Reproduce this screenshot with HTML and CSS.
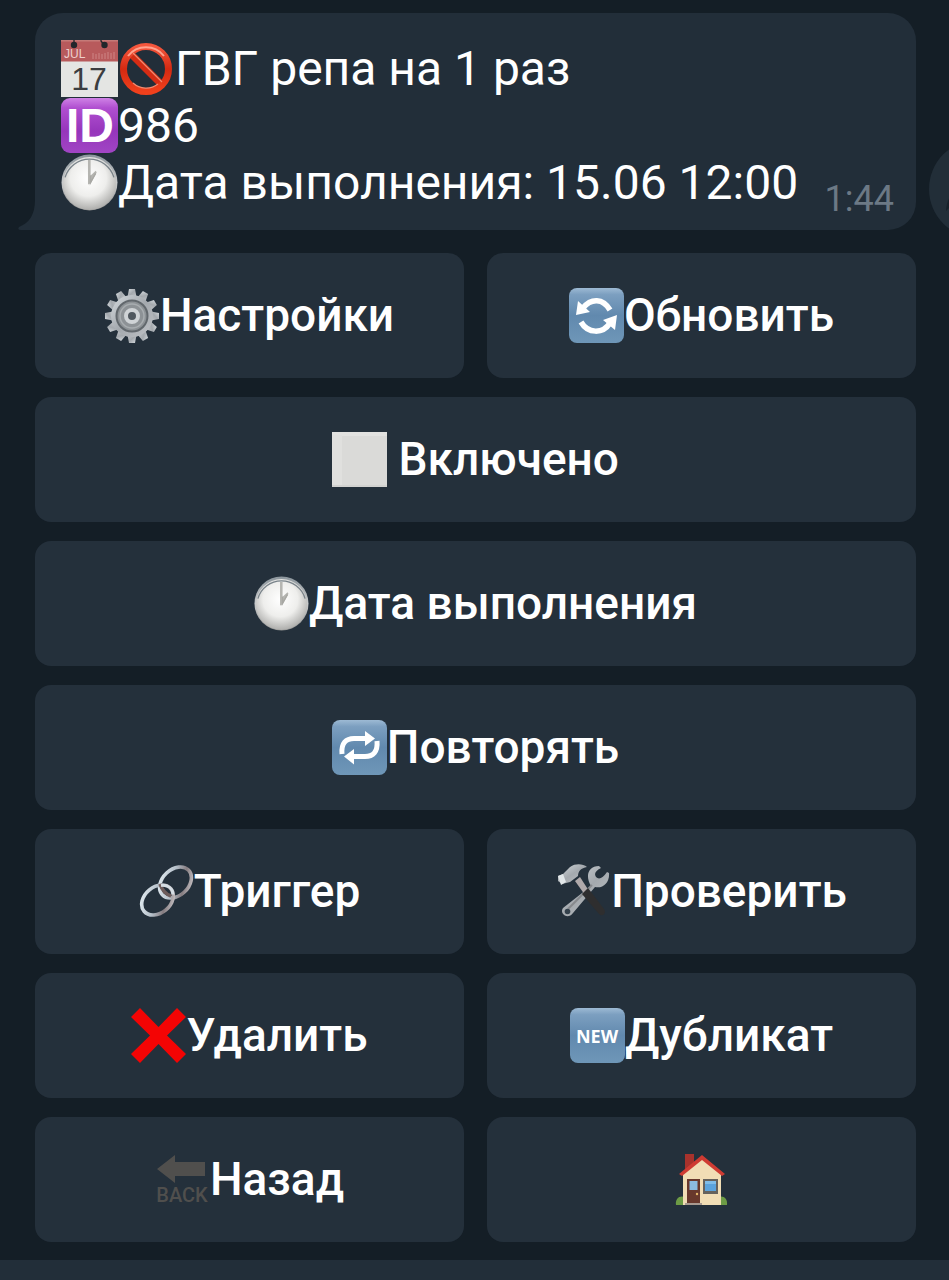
FILE: index.html
```html
<!DOCTYPE html>
<html lang="ru">
<head>
<meta charset="utf-8">
<meta name="viewport" content="width=device-width, initial-scale=1">
<title>ГВГ репа на 1 раз</title>
<link rel="stylesheet" href="styles.css">
</head>
<body>
<svg class="defs" aria-hidden="true">
  <defs>
    <linearGradient id="blue" x1="0" y1="0" x2="0" y2="1"><stop offset="0" stop-color="#9dbad4"/><stop offset=".12" stop-color="#7c9fc0"/><stop offset=".5" stop-color="#6189ae"/><stop offset="1" stop-color="#6f97b8"/></linearGradient>
    <linearGradient id="purple" x1="0" y1="0" x2="0" y2="1"><stop offset="0" stop-color="#cf82e6"/><stop offset=".18" stop-color="#b04fd0"/><stop offset=".6" stop-color="#9636bb"/><stop offset="1" stop-color="#a145c4"/></linearGradient>
    <linearGradient id="red" x1="0" y1="0" x2="0" y2="1"><stop offset="0" stop-color="#f4563c"/><stop offset=".5" stop-color="#d42a12"/><stop offset="1" stop-color="#f0401c"/></linearGradient>
    <linearGradient id="rim" x1="0" y1="0" x2="0" y2="1"><stop offset="0" stop-color="#8b959c"/><stop offset=".5" stop-color="#c9cbcc"/><stop offset="1" stop-color="#8f8f8e"/></linearGradient>
    <radialGradient id="face" cx=".48" cy=".4" r=".62"><stop offset="0" stop-color="#ffffff"/><stop offset=".55" stop-color="#eeeeec"/><stop offset="1" stop-color="#a9a9a7"/></radialGradient>
    <linearGradient id="steel" x1="0" y1="0" x2="1" y2="1"><stop offset="0" stop-color="#d5dade"/><stop offset=".5" stop-color="#a4a9ae"/><stop offset="1" stop-color="#c0c3c7"/></linearGradient>
    <linearGradient id="link" x1="0" y1="0" x2="1" y2="1"><stop offset="0" stop-color="#eaf3f8"/><stop offset=".45" stop-color="#b4bec8"/><stop offset=".7" stop-color="#857c80"/><stop offset="1" stop-color="#dedbdd"/></linearGradient>
    <symbol id="clock" viewBox="0 0 56 56">
      <circle cx="28" cy="28" r="27.5" fill="url(#rim)"/>
      <circle cx="28" cy="29" r="26" fill="url(#face)"/>
      <path d="M4 23a25 25 0 0 1 48 0" fill="none" stroke="#79838a" stroke-width="1.3"/>
      <path d="M26.500 6h2.600v15l5-4.500 1 1.500-6 11-2.600 1z" fill="#b5b5b1"/>
      <path d="M29 21v7l5-9" fill="none" stroke="#a8a8a4" stroke-width="1.500"/>
    </symbol>
  </defs>
</svg>

<main class="chat">
  <article class="message">
    <svg class="tail" viewBox="0 0 40 60" aria-hidden="true"><path d="M17 0V30C17 45 11 53 1 57Q-1 60 3 60H40V0z"/></svg>
    <div class="message-text">
      <p class="line">
        <svg class="emoji" viewBox="0 0 57 57" role="img" aria-label="Календарь">
          <path fill="#e4e5e3" d="M0 0h57v57H0z"/><path fill="#b85a5c" d="M0 0h57v21.500H0z"/><path fill="#c57a78" d="M0 0h57v1.500H0z"/>
          <g fill="#22262b"><circle cx="13" cy="5" r="3.200"/><circle cx="43.500" cy="5" r="3.200"/></g>
          <path d="M13 5V-1M43 5l-3-4V-1" fill="none" stroke="#22262b" stroke-width="1.300"/>
          <path d="M32 13v6M35 14v5M38 13v6M41 14v5M44 13v6M47 12v7M50 13v6M53 12v7" stroke="#ce8585"/>
          <text class="cal-month" x="3" y="18">JUL</text><text class="cal-day" x="28" y="50">17</text>
        </svg><svg class="emoji" viewBox="0 0 57 57" role="img" aria-label="Запрещено">
          <path d="M13 14 43 44" stroke="#d52c14" stroke-width="7"/>
          <circle cx="28" cy="29" r="22.500" fill="none" stroke="url(#red)" stroke-width="7"/>
          <path d="M10 16a23 23 0 0 1 36 0" fill="none" stroke="#ffa38f" stroke-width="2"/>
          <path d="M15 43a19.500 19.500 0 0 0 25 1M15 13l29 29" fill="none" stroke="#f18a70" stroke-width="1.200"/>
        </svg><span>ГВГ репа на 1 раз</span>
      </p>
      <p class="line">
        <svg class="emoji" viewBox="0 0 57 57" role="img" aria-label="Номер">
          <rect y="1" width="57" height="55" rx="9" fill="url(#purple)"/><text class="id-mark" x="29" y="45">ID</text>
        </svg><span>986</span>
      </p>
      <p class="line"><svg class="emoji" viewBox="0 0 56 56" role="img" aria-label="Час"><use href="#clock"/></svg><span>Дата выполнения: 15.06 12:00</span></p>
    </div>
    <time class="sent">1:44</time>
    <button class="share" type="button" aria-label="Поделиться"><svg viewBox="0 0 98 98" preserveAspectRatio="xMinYMid slice" aria-hidden="true"><circle cx="49" cy="49" r="49" fill="#222e38"/><path d="M50 29 76 51 50 71V59C36 59 25 62 17 71 18 53 30 43 50 41z" fill="#17212a"/></svg></button>
  </article>

  <div class="keyboard">
    <button class="key" type="button">
      <svg class="key-emoji" viewBox="0 0 55 55" aria-hidden="true">
        <g fill="url(#steel)">
          <path id="tooth" d="M22.500 9 24 1h6l1.500 8z"/><use href="#tooth" transform="rotate(30 27 28)"/><use href="#tooth" transform="rotate(60 27 28)"/><use href="#tooth" transform="rotate(90 27 28)"/><use href="#tooth" transform="rotate(120 27 28)"/><use href="#tooth" transform="rotate(150 27 28)"/><use href="#tooth" transform="rotate(180 27 28)"/><use href="#tooth" transform="rotate(210 27 28)"/><use href="#tooth" transform="rotate(240 27 28)"/><use href="#tooth" transform="rotate(270 27 28)"/><use href="#tooth" transform="rotate(300 27 28)"/><use href="#tooth" transform="rotate(330 27 28)"/>
          <circle cx="27" cy="28" r="21"/>
        </g>
        <circle cx="27" cy="28" r="15.500" fill="#8d9296" stroke="#62686d" stroke-width="2"/>
        <circle cx="27" cy="28" r="12" fill="none" stroke="#a8adb0" stroke-width="1.500"/>
        <circle cx="27" cy="28" r="6" fill="#50585f" stroke="#cfd3d6" stroke-width="4"/>
      </svg><span>Настройки</span>
    </button>
    <button class="key" type="button">
      <svg class="key-emoji" viewBox="0 0 55 55" aria-hidden="true">
        <rect width="55" height="55" rx="8" fill="url(#blue)"/>
        <g fill="none" stroke="#fff" stroke-width="5.500"><path d="M14 20c8-10 20-10 27 2"/><path d="M12 34c7 12 22 12 29 1"/></g>
        <path d="M9 13 7 27l14-3zM48 27 34 32l12 10z" fill="#fff"/>
      </svg><span>Обновить</span>
    </button>
    <button class="key wide" type="button">
      <svg class="key-emoji" viewBox="0 0 55 55" aria-hidden="true"><rect width="55" height="55" rx="1" fill="#dadad8"/><path d="M0 0h55v4H0z" fill="#e2e2e0"/><path d="M0 3h10v50H0z" fill="#e0e0de"/><path d="M0 53h55v2H0z" fill="#d2d2d0"/></svg><span>&nbsp;Включено</span>
    </button>
    <button class="key wide" type="button"><svg class="key-emoji" viewBox="0 0 56 56" aria-hidden="true"><use href="#clock"/></svg><span>Дата выполнения</span></button>
    <button class="key wide" type="button">
      <svg class="key-emoji" viewBox="0 0 55 55" aria-hidden="true">
        <rect width="55" height="55" rx="8" fill="url(#blue)"/>
        <g fill="none" stroke="#fff" stroke-width="5"><path d="M10 34C9 23 14 18.500 22 18.500H35"/><path d="M45 21C46 32 41 36.500 33 36.500H20"/></g>
        <path d="M33 11 43 18.500 33 26zM22 29 12 36.500l10 8z" fill="#fff"/>
      </svg><span>Повторять</span>
    </button>
    <button class="key" type="button">
      <svg class="key-emoji" viewBox="0 0 55 55" aria-hidden="true">
        <g fill="none" stroke="url(#link)" stroke-width="3.600"><ellipse cx="36.500" cy="18.500" rx="18" ry="13" transform="rotate(-43 36.500 18.500)"/><ellipse cx="18.500" cy="36" rx="17.500" ry="13" transform="rotate(-40 18.500 36)"/></g>
        <path d="M21 20c2 6 5 10 11 12" fill="none" stroke="#6e5c5b" stroke-width="3.500"/>
        <path d="M22 21.500c7-1 12 3 12 9" fill="none" stroke="#d5dde4" stroke-width="3"/>
      </svg><span>Триггер</span>
    </button>
    <button class="key" type="button">
      <svg class="key-emoji" viewBox="0 0 55 55" aria-hidden="true">
        <path d="M35 22C29 12 32 2 43 2L45 4C39 7 38 10 40 13 43 16 47 14 51 8L53 9C54 18 47 25 39 23L17 49c-5 7-14 1-10-5z" fill="url(#steel)"/>
        <path d="M36 21 12 45" stroke="#87898d" stroke-width="2"/><circle cx="11.500" cy="47.500" r="2.800" fill="#33404b"/>
        <path d="m19 17 5-4 9 14-4 4z" fill="#b0a9aa"/>
        <path d="m32 24 16 21c3 5-2 8-5 5L26 30z" fill="#2e2e2f"/>
        <path d="M2 12 7 10 14 3C20-1 27 0 31 3 25 4 22 7 22 12L14 18 6 20 2 17z" fill="url(#steel)"/><path d="m2 12 5-2 3 8-5 3z" fill="#e2e7e9"/>
      </svg><span>Проверить</span>
    </button>
    <button class="key" type="button">
      <svg class="key-emoji" viewBox="0 0 55 55" aria-hidden="true"><path d="M9 0 27.500 19 46 0 55 9 36 27.500 55 46 46 55 27.500 36 9 55 0 46 19 27.500 0 9z" fill="#f40404"/></svg><span>Удалить</span>
    </button>
    <button class="key" type="button">
      <svg class="key-emoji" viewBox="0 0 55 55" aria-hidden="true"><rect width="55" height="55" rx="8" fill="url(#blue)"/><text class="new-mark" x="27" y="35">NEW</text></svg><span>Дубликат</span>
    </button>
    <button class="key" type="button">
      <svg class="key-emoji" viewBox="0 0 55 55" aria-hidden="true"><path d="M2 17 20 3v7h30v14H20v7z" fill="#504f4d"/><text class="back-mark" x="27" y="50">BACK</text></svg><span>Назад</span>
    </button>
    <button class="key" type="button" aria-label="Домой">
      <svg class="key-emoji" viewBox="0 0 55 55" aria-hidden="true">
        <path d="M2 53c-1-7 4-10 9-8v8zM53 53c1-7-4-10-9-8v8z" fill="#6d9b45"/>
        <path d="M11 2h9v15h-9z" fill="#a8322c"/>
        <path d="M9 21 28 5 47 21V53H9z" fill="#f1ddb5"/>
        <path d="M28 3 51 22 48 24 28 8 8 24 5 22z" fill="#cf3b32"/>
        <path d="M13 27h13v24H13z" fill="#68382c"/><path d="M15.500 29h8v9h-8z" fill="#8bbbe0"/><circle cx="23" cy="42" r="1.200" fill="#e6b96a"/>
        <path d="M29 27h15v15H29z" fill="#66625c"/><path d="M31 29h11v10H31z" fill="#5ba3dc"/><path d="M31 29h11v3H31z" fill="#80bde8"/>
        <path d="M11 51h17v2H11z" fill="#a89a90"/>
      </svg>
    </button>
  </div>
</main>
<footer class="composer"></footer>
</body>
</html>
```

FILE: styles.css
```css
* { box-sizing: border-box; }

body {
  margin: 0;
  min-height: 100vh;
  display: flex;
  flex-direction: column;
  background: #141e26;
  color: #fff;
  font-family: Roboto, "Noto Sans", sans-serif;
}

.defs {
  position: absolute;
  width: 0;
  height: 0;
}

.chat {
  display: flex;
  flex-direction: column;
  gap: 23px;
  padding: 13px 33px 18px 35px;
}

.message {
  position: relative;
  display: flex;
  align-items: flex-end;
  justify-content: space-between;
  padding: 27px 22px 13px 26px;
  border-radius: 28px 28px 28px 0;
  background: #222e39;
}

.tail {
  position: absolute;
  left: -17px;
  bottom: 0;
  width: 40px;
  height: 60px;
  fill: #222e39;
}

.message-text {
  position: relative;
  margin-bottom: 6px;
}

.line {
  display: flex;
  align-items: center;
  margin: 0;
  font-size: 48px;
  line-height: 57px;
}

.emoji {
  flex: none;
  width: 57px;
  height: 57px;
}

.sent {
  color: #6c7985;
  font-size: 36px;
  line-height: 36px;
}

/* Only the left edge of the round button peeks in from the window's side. */
.share {
  position: absolute;
  right: -33px;
  bottom: -8px;
  width: 20px;
  height: 98px;
  padding: 0;
  border: 0;
  background: none;
}

.share svg {
  display: block;
  width: 100%;
  height: 100%;
}

.keyboard {
  display: grid;
  grid-template-columns: 1fr 1fr;
  gap: 19px 23px;
}

.key {
  display: flex;
  align-items: center;
  justify-content: center;
  padding: 35px 16px;
  border: 0;
  border-radius: 16px;
  background: #24303b;
  color: #fff;
  font: 500 46px/55px Roboto, "Noto Sans", sans-serif;
}

.wide { grid-column: 1 / -1; }

.key-emoji {
  flex: none;
  width: 55px;
  height: 55px;
}

.cal-month {
  fill: #edcfcd;
  font: 12px "Liberation Sans", sans-serif;
}

.cal-day {
  fill: #3b3d40;
  font: 32px "Liberation Sans", sans-serif;
  text-anchor: middle;
}

.id-mark {
  fill: #fff;
  font: 700 48px "Liberation Sans", sans-serif;
  text-anchor: middle;
}

.new-mark {
  fill: #fff;
  font: 700 18px "Noto Sans", sans-serif;
  text-anchor: middle;
}

.back-mark {
  fill: #504f4d;
  font: 500 20px Roboto, sans-serif;
  text-anchor: middle;
}

.composer {
  flex: 1;
  min-height: 19px;
  background: #222e39;
}
```
